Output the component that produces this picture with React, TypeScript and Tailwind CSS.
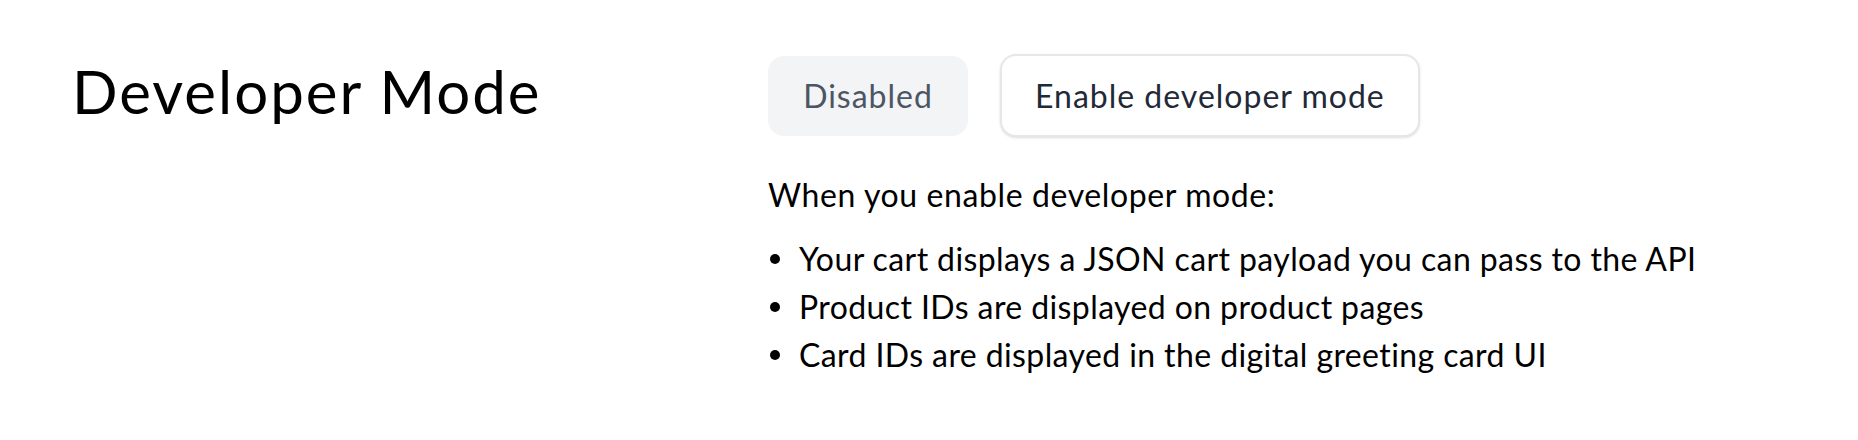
import React from 'react';

const items = [
  'Your cart displays a JSON cart payload you can pass to the API',
  'Product IDs are displayed on product pages',
  'Card IDs are displayed in the digital greeting card UI',
];

const DeveloperMode = () => {
  return (
    <div className="min-h-screen bg-white text-black" style={{ fontFamily: 'Lato, "Open Sans", sans-serif' }}>
      <div className="flex pl-[72px] pt-[54px]">
        <div className="w-[696px] shrink-0">
          <h2 className="-mt-[3px] text-[60px] leading-[80px] tracking-[2px] font-normal text-black">Developer Mode</h2>
        </div>
        <div className="flex flex-col">
          <div className="flex items-center gap-[32px]">
            <div className="h-[80px] w-[200px] rounded-[16px] bg-[#f3f4f6] flex items-center justify-center text-[32px] tracking-[1px] text-[#4b5563]">
              Disabled
            </div>
            <button className="h-[83px] px-[33px] rounded-[16px] border-2 border-[#e5e7eb] bg-white shadow-sm flex items-center text-[32px] tracking-[1px] text-[#1f2937]">
              Enable developer mode
            </button>
          </div>
          <p className="mt-[34px] text-[32px] leading-[48px] tracking-[0.6px]">When you enable developer mode:</p>
          <ul className="mt-[16px] text-[32px] leading-[48px] tracking-[0.4px]">
            {items.map((item) => (
              <li key={item} className="flex items-center">
                <span className="w-[10px] h-[10px] rounded-full bg-black ml-[2px] mr-[19px] shrink-0" />
                {item}
              </li>
            ))}
          </ul>
        </div>
      </div>
    </div>
  );
};

export default function App() {
  return <DeveloperMode />;
}
